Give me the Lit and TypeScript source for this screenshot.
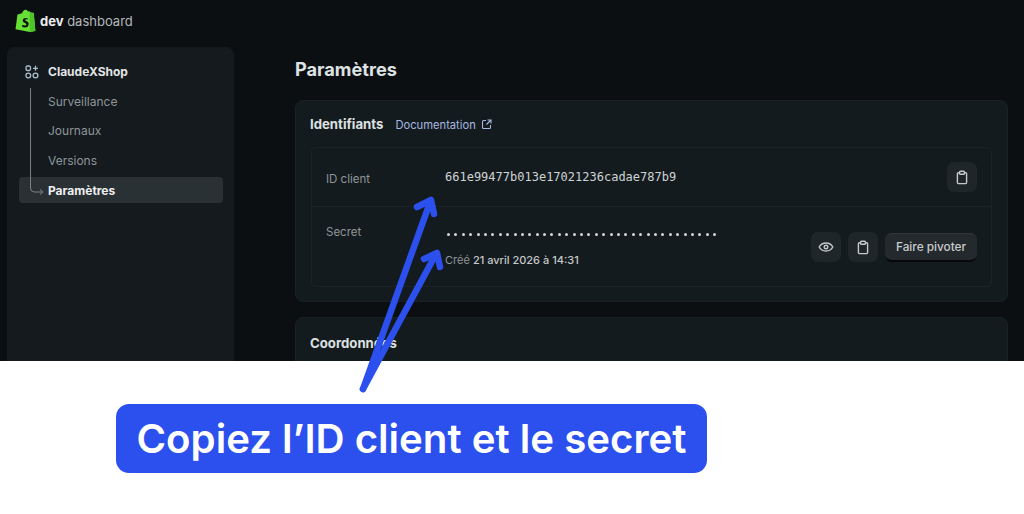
import { LitElement, html, css, svg } from "lit";
import { customElement } from "lit/decorators.js";

const clip = html`<svg width="14" height="15" viewBox="0 0 14 15" fill="none" stroke="#c4c8c9" stroke-width="1.4" stroke-linejoin="round"><path d="M4.600 2.800H3.400a1 1 0 0 0-1 1v8.800a1 1 0 0 0 1 1h7.200a1 1 0 0 0 1-1V3.800a1 1 0 0 0-1-1H9.400"/><rect x="4.600" y="1.200" width="4.800" height="3" rx=".8"/></svg>`;
const eye = html`<svg width="16" height="14" viewBox="0 0 16 14" fill="none" stroke="#c4c8c9" stroke-width="1.4"><path d="M1.200 7C2.600 4.400 5 3 8 3s5.400 1.400 6.800 4C13.400 9.600 11 11 8 11S2.600 9.600 1.200 7Z"/><circle cx="8" cy="7" r="1.800"/></svg>`;

@customElement("app-root")
export class AppRoot extends LitElement {
  static styles = css`
    :host { display: block; position: relative; width: 1024px; height: 514px; background: #fff; overflow: hidden; font-family: Inter, "Liberation Sans", sans-serif; }
    .dark { height: 361px; background: #0c0f12; overflow: hidden; display: flex; flex-direction: column; }
    .top { height: 47px; flex: none; display: flex; align-items: flex-start; gap: 4px; padding: 9px 0 0 15px; box-sizing: border-box; font-size: 13px; line-height: 24px; color: #b4b8ba; }
    .top b { color: #eceeee; font-weight: 700; }
    .body { flex: 1; display: flex; }
    .side { margin-left: 7px; width: 227px; flex: none; background: #141a1e; border-radius: 8px 8px 0 0; box-sizing: border-box; padding: 12px 11px 0 12px; height: 330px; }
    .shop { display: flex; align-items: center; gap: 9px; height: 25px; padding-left: 6px; font-size: 12px; font-weight: 700; color: #e2e5e6; }
    .nav { position: relative; margin-top: 4px; }
    .tree { position: absolute; left: 10px; top: 0; }
    .item { height: 26px; margin-bottom: 3.800px; display: flex; align-items: center; padding-left: 29px; font-size: 12px; color: #8f9599; border-radius: 4px; }
    .item.on { background: #2a3135; color: #eef0f0; font-weight: 700; }
    .main { margin-left: 61px; width: 713px; flex: none; display: flex; flex-direction: column; }
    h1 { margin: 0; height: 53px; font-size: 18.200px; line-height: 44px; font-weight: 700; color: #dfe2e3; }
    .card { background: #141b1e; border: 1px solid #1a2125; border-radius: 8px; box-sizing: border-box; padding: 0 15px; }
    .c1 { height: 202px; margin-bottom: 15px; }
    .c2 { height: 100px; padding-top: 16px; }
    .head { height: 46px; margin-left: -1px; display: flex; align-items: center; gap: 12px; font-size: 13.200px; font-weight: 700; color: #dde0e1; }
    .c2 .head { height: auto; line-height: 18px; }
    .doc { display: flex; align-items: center; gap: 5.500px; padding-top: 1px; font-size: 11.200px; font-weight: 400; color: #a6b8e0; }
    .inner { border: 1px solid #1b2327; border-radius: 5px; height: 138px; display: flex; flex-direction: column; }
    .row { display: flex; box-sizing: border-box; padding: 0 14px; }
    .r1 { height: 59px; align-items: center; border-bottom: 1px solid #1b2327; }
    .r2 { flex: 1; }
    .label { width: 119px; flex: none; font-size: 11.500px; color: #8f9599; }
    .r1 .label { padding-top: 3px; }
    .r2 .label { padding-top: 18px; }
    .mono { font-family: "DejaVu Sans Mono", "Liberation Mono", monospace; font-size: 12px; color: #cfd3d4; flex: 1; padding-bottom: 1px; }
    .sec { flex: 1; padding-top: 18px; }
    .dots { display: flex; gap: 4.400px; height: 19px; align-items: center; padding-left: 2px; }
    .dots i { width: 3px; height: 3px; border-radius: 50%; background: #d5d8d9; }
    .date { margin-top: 9px; font-size: 11px; color: #8f9599; }
    .date b { font-weight: 500; color: #c5c9ca; }
    .icon { width: 30px; height: 30px; border-radius: 7px; background: #1f2629; display: flex; align-items: center; justify-content: center; flex: none; }
    .acts { display: flex; align-items: center; gap: 7px; height: 30px; margin-top: 25px; }
    .btn { height: 29px; width: 92px; box-sizing: border-box; border-radius: 7px; background: #23292c; border-top: 1px solid #30383b; border-bottom: 2px solid #060809; display: flex; align-items: center; justify-content: center; font-size: 11.800px; font-weight: 500; color: #c8cccd; white-space: nowrap; }
    .arrows { position: absolute; left: 0; top: 0; pointer-events: none; }
    .pill { position: absolute; left: 116px; top: 404px; width: 591px; height: 69px; background: #2c50ee; border-radius: 13px; display: flex; align-items: center; justify-content: center; font-family: Inter, sans-serif; font-weight: 600; font-size: 40.200px; color: #fff; white-space: nowrap; }
  `;

  render() {
    const dots = Array.from({ length: 37 }, () => html`<i></i>`);
    return html`
      <div class="dark">
        <div class="top">
          <svg width="21" height="24" viewBox="0 0 21 24">
            <path d="M2.500 5.600 7 4.200C8 1.800 9.500.6 11 .8c1 .1 1.600 1 2 1.800l1.500-.3 1.200 1.200 3 .3 1.700 18-5.400 1.200L0.500 20.300Z" fill="#66e034"/>
            <path d="M14.500 2.300l1.200 1.500 3 .3 1.700 18-5.400 1.200Z" fill="#4fc428"/>
            <path d="M13 9.400c-2.800-1.200-5.300-.2-5.300 2 0 2.400 3.600 2.300 3.600 4 0 1.300-2 1.400-3.800.4l-.5 2c2.800 1.300 6.700.8 6.700-2.800 0-2.800-3.500-2.800-3.500-4 0-.9 1.200-1 2.500-.5Z" fill="#0b1410"/>
          </svg>
          <span><b>dev</b> dashboard</span>
        </div>
        <div class="body">
          <div class="side">
            <div class="shop">
              <svg width="14" height="14" viewBox="0 0 14 14" fill="none" stroke="#a9c0cc" stroke-width="1.300"><rect x="1" y="1" width="4.500" height="4.500" rx="1.500"/><circle cx="3.300" cy="10.500" r="2.400"/><circle cx="10.500" cy="10.500" r="2.400"/><path d="M10.500 .8v5M8 3.300h5"/></svg>
              ClaudeXShop
            </div>
            <div class="nav">
              <div class="item">Surveillance</div>
              <div class="item">Journaux</div>
              <div class="item">Versions</div>
              <div class="item on">Paramètres</div>
              <svg class="tree" width="22" height="112" viewBox="0 0 22 112" fill="none" stroke="#7c8286" stroke-width="1"><path d="M1.500 0V100q0 4 4 4h8"/><path d="M11 101.500l3 2.500-3 2.500" /></svg>
            </div>
          </div>
          <div class="main">
            <h1>Paramètres</h1>
            <div class="card c1">
              <div class="head">Identifiants
                <span class="doc">Documentation
                  <svg width="11" height="11" viewBox="0 0 11 11" fill="none" stroke="#a6b8e0" stroke-width="1.100"><path d="M5 1.500H2.500a1 1 0 0 0-1 1v6a1 1 0 0 0 1 1h6a1 1 0 0 0 1-1V6M6.500 1h3.500v3.500M10 1 5.500 5.500"/></svg>
                </span>
              </div>
              <div class="inner">
                <div class="row r1">
                  <div class="label">ID client</div>
                  <div class="mono">661e99477b013e17021236cadae787b9</div>
                  <div class="icon">${clip}</div>
                </div>
                <div class="row r2">
                  <div class="label">Secret</div>
                  <div class="sec">
                    <div class="dots">${dots}</div>
                    <div class="date">Créé <b>21 avril 2026 à 14:31</b></div>
                  </div>
                  <div class="acts">
                    <div class="icon">${eye}</div>
                    <div class="icon">${clip}</div>
                    <div class="btn">Faire pivoter</div>
                  </div>
                </div>
              </div>
            </div>
            <div class="card c2">
              <div class="head">Coordonnées</div>
            </div>
          </div>
        </div>
      </div>
      <svg class="arrows" width="1024" height="514" viewBox="0 0 1024 514" fill="none" stroke="#2c50ee" stroke-width="6.500" stroke-linecap="round" stroke-linejoin="round">
        ${svg`<path d="M363 389 430.500 201"/><path d="M417 207 431 200 434 214"/><path d="M363 389 436 254"/><path d="M424 259 437 253 440 267"/>`}
      </svg>
      <div class="pill">Copiez l’ID client et le secret</div>
    `;
  }
}
